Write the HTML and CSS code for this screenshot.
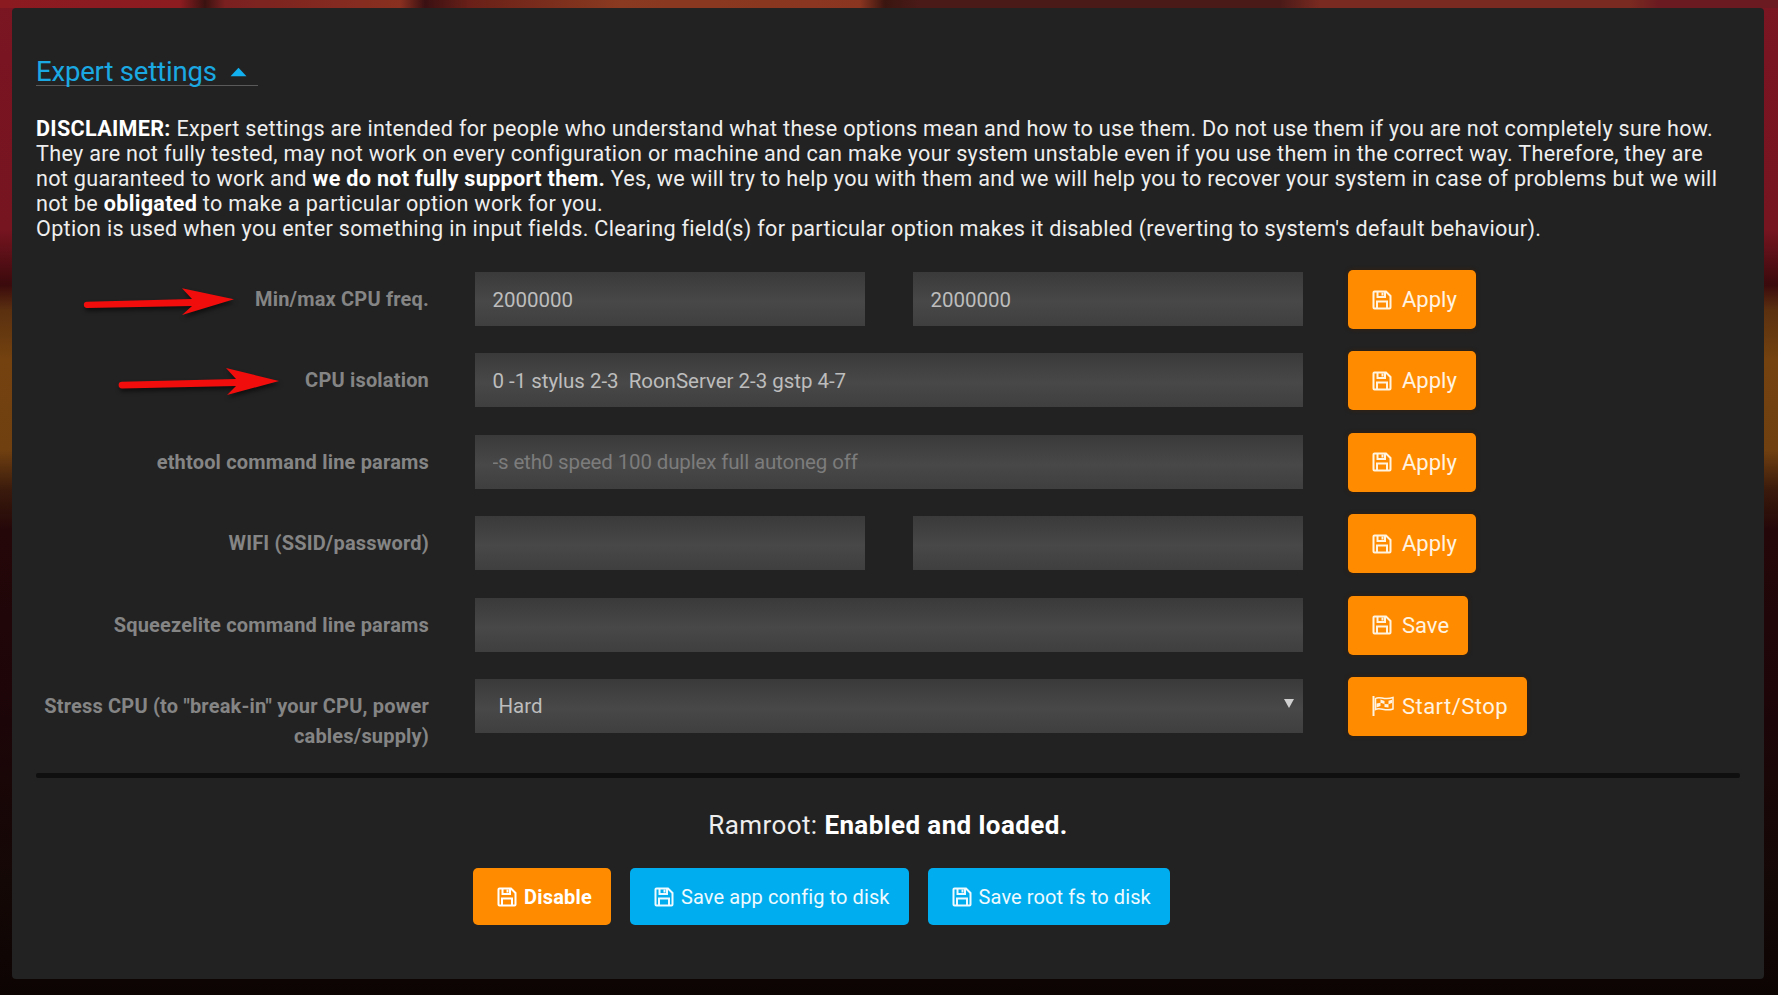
FILE: index.html
```html
<!DOCTYPE html>
<html lang="en">
<head>
<meta charset="utf-8">
<title>Expert settings</title>
<link rel="stylesheet" href="styles.css">
</head>
<body>
<svg class="defs" width="0" height="0" aria-hidden="true">
  <symbol id="save" viewBox="0 0 20 20">
    <path class="ln" d="M2.5 1.5H14L18.5 6V17.5a1 1 0 0 1-1 1H2.5a1 1 0 0 1-1-1V2.500a1 1 0 0 1 1-1Z"/>
    <path class="ln" d="M5.500 2V7H13V2"/>
    <path class="ln" d="M5 18V11.500H15V18"/>
    <rect class="fl" x="9.500" y="2.500" width="2" height="3"/>
  </symbol>
  <symbol id="flag" viewBox="0 0 22 20">
    <path class="ln" d="M1.500 0V20"/>
    <path class="ln thin" d="M3.500 2.500C8 -.5 12 5 21 1.500V13C13 16 8 10.500 3.500 13.500Z"/>
    <path class="fl" d="M8.500 3.500l4 1.500V8L8.500 6.800ZM12.500 8l4 .2V11.500L12.500 11ZM16.500 4.800l3.500-1V7l-3.500 1.200ZM4.500 7.500l4-.7V10l-4 1.500Z"/>
  </symbol>
</svg>
<main class="panel">
  <svg class="arrows" viewBox="70 280 230 125" aria-hidden="true">
    <path d="M85 301.700L190 299L180 288.300L232 299.300L180 315L190 306L85 308a3 3 0 0 1 0-6.300Z"/>
    <path d="M120 381.700L234 379L224 368L277 381L225 395L234 386L120 388.500a3 3 0 0 1 0-6.800Z"/>
  </svg>
  <h2 class="toggle"><a class="toggle-link">Expert settings<svg class="caret" viewBox="0 0 16 9" aria-hidden="true"><path d="M8 .5L15.500 8.500H.5Z"/></svg></a></h2>
  <p class="disclaimer"><strong>DISCLAIMER:</strong> Expert settings are intended for people who understand what these options mean and how to use them. Do not use them if you are not completely sure how.<br>They are not fully tested, may not work on every configuration or machine and can make your system unstable even if you use them in the correct way. Therefore, they are<br>not guaranteed to work and <strong>we do not fully support them.</strong> Yes, we will try to help you with them and we will help you to recover your system in case of problems but we will<br>not be <strong>obligated</strong> to make a particular option work for you.<br>Option is used when you enter something in input fields. Clearing field(s) for particular option makes it disabled (reverting to system's default behaviour).</p>

  <form class="options">
    <label class="opt-label">Min/max CPU freq.</label>
    <div class="fields"><input class="field" value="2000000"><input class="field" value="2000000"></div>
    <div><button type="button" class="btn orange"><svg class="ico"><use href="#save"/></svg>Apply</button></div>

    <label class="opt-label">CPU isolation</label>
    <div class="fields"><input class="field" value="0 -1 stylus 2-3  RoonServer 2-3 gstp 4-7"></div>
    <div><button type="button" class="btn orange"><svg class="ico"><use href="#save"/></svg>Apply</button></div>

    <label class="opt-label">ethtool command line params</label>
    <div class="fields"><input class="field" placeholder="-s eth0 speed 100 duplex full autoneg off"></div>
    <div><button type="button" class="btn orange"><svg class="ico"><use href="#save"/></svg>Apply</button></div>

    <label class="opt-label">WIFI (SSID/password)</label>
    <div class="fields"><input class="field"><input class="field"></div>
    <div><button type="button" class="btn orange"><svg class="ico"><use href="#save"/></svg>Apply</button></div>

    <label class="opt-label">Squeezelite command line params</label>
    <div class="fields"><input class="field"></div>
    <div><button type="button" class="btn orange"><svg class="ico"><use href="#save"/></svg>Save</button></div>

    <label class="opt-label">Stress CPU (to "break-in" your CPU, power<br>cables/supply)</label>
    <div class="fields select-wrap"><select class="field select"><option>Hard</option></select></div>
    <div><button type="button" class="btn orange wide"><svg class="ico ico-flag"><use href="#flag"/></svg>Start/Stop</button></div>
  </form>

  <hr class="rule">
  <p class="status">Ramroot: <strong>Enabled and loaded.</strong></p>
  <div class="actions">
    <button type="button" class="btn small orange strong"><svg class="ico"><use href="#save"/></svg>Disable</button>
    <button type="button" class="btn small blue"><svg class="ico"><use href="#save"/></svg>Save app config to disk</button>
    <button type="button" class="btn small blue"><svg class="ico"><use href="#save"/></svg>Save root fs to disk</button>
  </div>
</main>
</body>
</html>
```
FILE: styles.css
```css
* { box-sizing: border-box; }
html, body { height: 100%; }
body {
  margin: 0;
  overflow: hidden;
  font-family: Roboto, "Liberation Sans", sans-serif;
  color: #eeeeee;
  background:
    linear-gradient(90deg, #8a1a20 0, #8c1c20 180px, #3a1210 205px, #7a2020 225px, #8a3020 400px, #3a1012 425px, #6a2018 470px, #8a3a20 620px, #8a3520 860px, #3a1510 885px, #4a1a18 920px, #4a1a18 1280px, #7a2a20 1320px, #7a2a20 1630px, #6a1a20 1660px, #6a1a20 100%) 0 0 / 100% 8px no-repeat,
    linear-gradient(180deg, #7a1522 0, #761420 230px, #3a0a0c 285px, #5a3010 310px, #74420f 360px, #704010 450px, #3a1a0c 490px, #240709 530px, #1c0508 720px, #140806 880px, #0c0403 100%);
}
.defs { position: absolute; }
.ln { fill: none; stroke: currentColor; stroke-width: 2; }
.thin { stroke-width: 1.500px; }
.fl { fill: currentColor; }

.panel {
  position: relative;
  margin: 8px 14px 0 12px;
  padding: 43px 24px 54px;
  background: #222222;
  border-radius: 4px;
}
.arrows {
  position: absolute;
  left: 60px;
  top: 272px;
  width: 230px;
  height: 125px;
  fill: #f20d0d;
  filter: drop-shadow(1px 3px 2px rgba(0, 0, 0, .55));
}

.toggle { margin: 0; font-size: 27.500px; font-weight: 400; line-height: 34px; }
.toggle-link {
  display: flex;
  align-items: center;
  width: 222px;
  height: 35px;
  padding-top: 8px;
  border-bottom: 1px solid #5a5a5a;
  color: #1ba9e3;
  letter-spacing: -.18px;
}
.caret { width: 17px; height: 10px; margin: 0 0 0 13px; fill: #12b0ee; }

.disclaimer {
  margin: 30px 0 29px;
  font-size: 21.600px;
  letter-spacing: .3px;
  line-height: 25px;
  white-space: nowrap;
}
.disclaimer strong { font-weight: 700; color: #fff; }

.options {
  display: grid;
  grid-template-columns: 393px 828px auto;
  column-gap: 45.500px;
  grid-auto-rows: 81.400px;
  align-items: start;
}
.opt-label {
  padding-top: 14px;
  font-size: 20px;
  font-weight: 700;
  letter-spacing: .18px;
  line-height: 30px;
  color: #858585;
  text-align: right;
  white-space: nowrap;
}
.fields { display: flex; gap: 48px; padding-top: 2px; }
.field {
  flex: 1 1 0;
  min-width: 0;
  height: 54px;
  padding: 1px 18px 0;
  border: 0;
  border-radius: 0;
  outline: 0;
  background: linear-gradient(180deg, #3a3a3a 0, #484848 55%, #3f3f3f 100%);
  color: #bdbdbd;
  font: 400 20.500px Roboto, sans-serif;
  letter-spacing: -.03px;
  white-space: pre;
}
.field::placeholder { color: #7c7c7c; opacity: 1; letter-spacing: -.15px; }
.select-wrap { position: relative; }
.select { appearance: none; padding-left: 24px; }
.select-wrap::after {
  content: "";
  position: absolute;
  right: 9px;
  top: 22px;
  border-left: 5px solid transparent;
  border-right: 5px solid transparent;
  border-top: 9px solid #d0d0d0;
}

.btn {
  display: inline-flex;
  align-items: center;
  height: 59px;
  padding: 0 19px 0 24px;
  border: 0;
  border-radius: 5px;
  color: #fff3e2;
  font: 400 22px Roboto, sans-serif;
  box-shadow: 0 0 4px rgba(60, 30, 5, .9);
}
.wide { letter-spacing: .45px; }
.orange { background: #ff8c00; }
.blue { background: #00aeef; color: #eefaff; }
.ico { width: 20px; height: 20px; margin-right: 10px; flex: none; }
.ico-flag { width: 22px; margin-right: 8px; }

.rule {
  height: 5px;
  margin: 15px 0 0;
  border: 0;
  border-radius: 2px;
  background: #0f0f0f;
}
.status {
  margin: 32px 0 28px;
  font-size: 26px;
  letter-spacing: .4px;
  line-height: 30px;
  text-align: center;
}
.status strong { font-weight: 700; color: #fff; }
.actions { display: flex; gap: 19px; margin-left: 437px; }
.small {
  height: 57px;
  padding: 0 19px 0 24px;
  font-size: 20px;
  letter-spacing: .1px;
  box-shadow: none;
}
.small .ico { margin-right: 7px; }
.small.strong { font-weight: 700; color: #fff; letter-spacing: .2px; }
```
